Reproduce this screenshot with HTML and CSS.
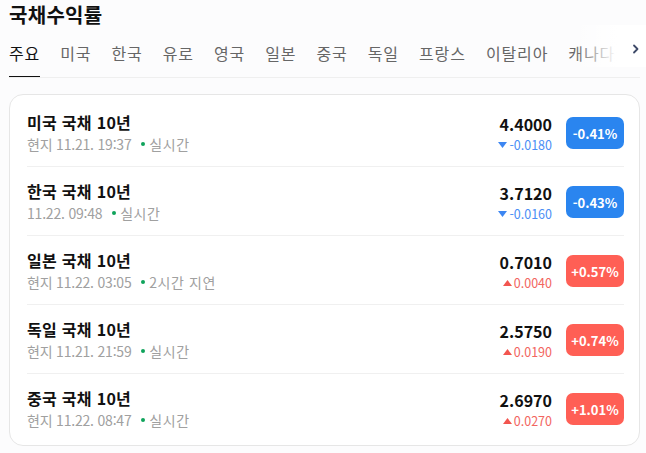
FILE: index.html
```html
<!DOCTYPE html>
<html lang="ko">
<head>
    <meta charset="UTF-8">
    <meta name="viewport" content="width=device-width, initial-scale=1.0">
    <title>국채수익률</title>
    <link rel="stylesheet" href="styles.css">
</head>
<body>
    <h1 class="page-title">국채수익률</h1>

    <nav class="tab-bar">
        <ul class="tab-list">
            <li class="tab active">주요</li>
            <li class="tab">미국</li>
            <li class="tab">한국</li>
            <li class="tab">유로</li>
            <li class="tab">영국</li>
            <li class="tab">일본</li>
            <li class="tab">중국</li>
            <li class="tab">독일</li>
            <li class="tab">프랑스</li>
            <li class="tab">이탈리아</li>
            <li class="tab">캐나다</li>
        </ul>
        <div class="tab-fade">
            <svg class="tab-arrow" width="8" height="10" viewBox="0 0 8 10">
                <path d="M2 1.5 L5.5 5 L2 8.5" fill="none" stroke="#3d4968" stroke-width="1.8" stroke-linecap="round" stroke-linejoin="round"/>
            </svg>
        </div>
    </nav>

    <div class="bond-card">
        <div class="bond-row">
            <div class="bond-info">
                <div class="bond-name">미국 국채 10년</div>
                <div class="bond-meta">현지 11.21. 19:37 <span class="live-dot"></span><span class="live">실시간</span></div>
            </div>
            <div class="bond-price">
                <div class="price">4.4000</div>
                <div class="change down"><svg class="arrow" width="9" height="6" viewBox="0 0 9 6"><path d="M0 0 H9 L4.5 6 Z"/></svg>-0.0180</div>
            </div>
            <div class="badge down">-0.41%</div>
        </div>

        <div class="bond-row">
            <div class="bond-info">
                <div class="bond-name">한국 국채 10년</div>
                <div class="bond-meta">11.22. 09:48 <span class="live-dot"></span><span class="live">실시간</span></div>
            </div>
            <div class="bond-price">
                <div class="price">3.7120</div>
                <div class="change down"><svg class="arrow" width="9" height="6" viewBox="0 0 9 6"><path d="M0 0 H9 L4.5 6 Z"/></svg>-0.0160</div>
            </div>
            <div class="badge down">-0.43%</div>
        </div>

        <div class="bond-row">
            <div class="bond-info">
                <div class="bond-name">일본 국채 10년</div>
                <div class="bond-meta">현지 11.22. 03:05 <span class="live-dot"></span><span class="live">2시간 지연</span></div>
            </div>
            <div class="bond-price">
                <div class="price">0.7010</div>
                <div class="change up"><svg class="arrow" width="9" height="6" viewBox="0 0 9 6"><path d="M0 6 H9 L4.5 0 Z"/></svg>0.0040</div>
            </div>
            <div class="badge up">+0.57%</div>
        </div>

        <div class="bond-row">
            <div class="bond-info">
                <div class="bond-name">독일 국채 10년</div>
                <div class="bond-meta">현지 11.21. 21:59 <span class="live-dot"></span><span class="live">실시간</span></div>
            </div>
            <div class="bond-price">
                <div class="price">2.5750</div>
                <div class="change up"><svg class="arrow" width="9" height="6" viewBox="0 0 9 6"><path d="M0 6 H9 L4.5 0 Z"/></svg>0.0190</div>
            </div>
            <div class="badge up">+0.74%</div>
        </div>

        <div class="bond-row">
            <div class="bond-info">
                <div class="bond-name">중국 국채 10년</div>
                <div class="bond-meta">현지 11.22. 08:47 <span class="live-dot"></span><span class="live">실시간</span></div>
            </div>
            <div class="bond-price">
                <div class="price">2.6970</div>
                <div class="change up"><svg class="arrow" width="9" height="6" viewBox="0 0 9 6"><path d="M0 6 H9 L4.5 0 Z"/></svg>0.0270</div>
            </div>
            <div class="badge up">+1.01%</div>
        </div>
    </div>
</body>
</html>
```

FILE: styles.css
```css
body {
    margin: 0;
    padding: 0 6px 0 9px;
    font-family: 'Noto Sans CJK KR', 'Noto Sans', sans-serif;
    background-color: #fcfcfd;
    color: #111;
}

.page-title {
    margin: 0;
    font-size: 20px;
    font-weight: 700;
    line-height: 29px;
    letter-spacing: 0.3px;
    color: #111;
}

.tab-bar {
    position: relative;
    margin-top: 12px;
    border-bottom: 1px solid #efefef;
}

.tab-list {
    display: flex;
    gap: 20px;
    list-style: none;
    margin: 0;
    padding: 0;
    white-space: nowrap;
    overflow: hidden;
}

.tab {
    font-size: 16px;
    line-height: 24px;
    letter-spacing: 0.9px;
    color: #666;
    padding-bottom: 11px;
    border-bottom: 2px solid transparent;
    margin-bottom: -1px;
    flex-shrink: 0;
}

.tab.active {
    color: #111;
    border-bottom-color: #111;
}

.tab-fade {
    position: absolute;
    top: -16px;
    right: -6px;
    bottom: 10px;
    width: 72px;
    background: linear-gradient(to right, rgba(255, 255, 255, 0), #fff 60%);
    display: flex;
    align-items: center;
    justify-content: flex-end;
    padding: 6px 6px 0 0;
    box-sizing: border-box;
}

.bond-card {
    margin-top: 16px;
    background-color: #fff;
    border: 1px solid #e6e6e6;
    border-radius: 14px;
    padding: 3px 15px 3px 17px;
}

.bond-row {
    display: flex;
    align-items: center;
    padding: 13px 0 11px;
    border-bottom: 1px solid #f0f0f0;
}

.bond-row:last-child {
    border-bottom: none;
}

.bond-info {
    flex: 1;
}

.bond-name {
    font-size: 16px;
    font-weight: 700;
    line-height: 22px;
    letter-spacing: 0.3px;
    color: #111;
}

.bond-meta {
    display: flex;
    align-items: center;
    font-size: 14px;
    line-height: 22px;
    letter-spacing: -0.2px;
    color: #a0a0a0;
    white-space: pre;
}

.live-dot {
    width: 4px;
    height: 4px;
    border-radius: 50%;
    background-color: #0fa35b;
    margin: 0 4px 0 6px;
}

.live {
    letter-spacing: 0.6px;
}

.bond-price {
    text-align: right;
}

.price {
    font-size: 16px;
    font-weight: 700;
    line-height: 23px;
    color: #111;
}

.change {
    display: flex;
    align-items: center;
    justify-content: flex-end;
    font-size: 12.5px;
    line-height: 18px;
}

.change .arrow {
    margin-right: 2px;
}

.change.down {
    color: #4a8ef5;
    fill: #3d86f2;
}

.change.up {
    color: #f26560;
    fill: #f2554f;
}

.badge {
    width: 58px;
    height: 32px;
    margin-left: 14px;
    border-radius: 7px;
    display: flex;
    align-items: center;
    justify-content: center;
    color: #fff;
    font-size: 13px;
    font-weight: 700;
}

.badge.down {
    background-color: #2a85ef;
}

.badge.up {
    background-color: #ff5f55;
}
```
